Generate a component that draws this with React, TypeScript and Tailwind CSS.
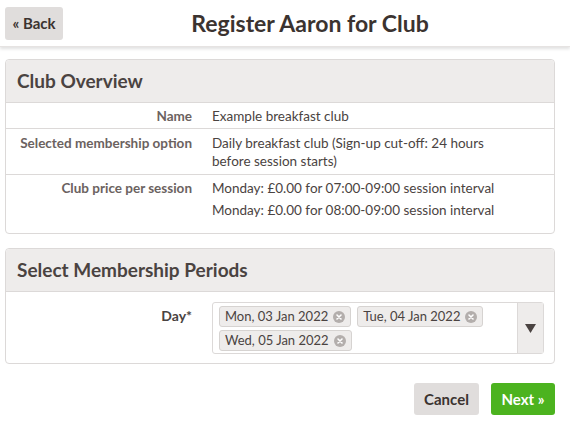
import React from "react";

const font = { fontFamily: "Lato, 'Liberation Sans', sans-serif" };

function Tag({ label }: { label: string }) {
  return (
    <span className="inline-flex items-center h-[21px] px-[5px] bg-[#eeeceb] border border-[#d6d3d1] rounded-[3px] text-[13px] text-[#4a4341] gap-[5px]">
      {label}
      <svg width="12" height="12" viewBox="0 0 12 12">
        <circle cx="6" cy="6" r="6" fill="#b3aeac" />
        <path d="M4 4 L8 8 M8 4 L4 8" stroke="#fff" strokeWidth="1.6" strokeLinecap="round" />
      </svg>
    </span>
  );
}

export default function App() {
  return (
    <div className="w-[570px] h-[430px] bg-white text-[#4a4341]" style={font}>
      <div className="h-[47px] flex items-center px-[5px] shadow-[0_2px_3px_rgba(0,0,0,0.12)] border-b border-[#e6e3e2]">
        <button className="h-[33px] w-[58px] bg-[#e0dddc] rounded-[3px] text-[15px] font-bold text-[#3b3330]">
          « Back
        </button>
        <h1 className="flex-1 text-center text-[23px] font-bold text-[#3b3330] ml-[62px] mr-[70px]">
          Register Aaron for Club
        </h1>
      </div>

      <div className="ml-[5px] mr-[15px] mt-[12px] border border-[#dcd9d8] rounded-[4px]">
        <div className="h-[43px] bg-[#eeeceb] border-b border-[#dcd9d8] flex items-center px-[11px] text-[19px] font-bold text-[#4a4341] rounded-t-[4px]">
          Club Overview
        </div>
        <div className="grid grid-cols-[186px_1fr] text-[13.5px] leading-[18px]">
          <div className="text-right font-bold text-[#6b6260] pt-[4px] pb-[3px] border-b border-[#dcd9d8]">Name</div>
          <div className="pl-[20px] pt-[4px] pb-[3px] border-b border-[#dcd9d8]">Example breakfast club</div>
          <div className="text-right font-bold text-[#6b6260] pt-[5px] pb-[4px] border-b border-[#dcd9d8]">Selected membership option</div>
          <div className="pl-[20px] pr-[50px] pt-[5px] pb-[4px] border-b border-[#dcd9d8]">
            Daily breakfast club (Sign-up cut-off: 24 hours before session starts)
          </div>
          <div className="text-right font-bold text-[#6b6260] pt-[2px] pb-[12px] leading-[22px]">Club price per session</div>
          <div className="pl-[20px] pt-[2px] pb-[12px] leading-[22px]">
            <div>Monday: £0.00 for 07:00-09:00 session interval</div>
            <div>Monday: £0.00 for 08:00-09:00 session interval</div>
          </div>
        </div>
      </div>

      <div className="ml-[5px] mr-[15px] mt-[14px] border border-[#dcd9d8] rounded-[4px]">
        <div className="h-[43px] bg-[#eeeceb] border-b border-[#dcd9d8] flex items-center px-[11px] text-[19px] font-bold text-[#4a4341] rounded-t-[4px]">
          Select Membership Periods
        </div>
        <div className="grid grid-cols-[186px_1fr] pt-[10px] pb-[9px]">
          <div className="text-right font-bold text-[#4a4341] text-[14px] pt-[3px]">Day*</div>
          <div className="pl-[20px] pr-[10px]">
            <div className="flex border border-[#dcd9d8] rounded-[3px] h-[52px]">
              <div className="flex-1 flex flex-wrap content-start gap-x-[6px] gap-y-[3px] pl-[6px] pt-[3px]">
                <Tag label="Mon, 03 Jan 2022" />
                <Tag label="Tue, 04 Jan 2022" />
                <Tag label="Wed, 05 Jan 2022" />
              </div>
              <div className="w-[26px] bg-[#eeeceb] border-l border-[#dcd9d8] flex items-center justify-center">
                <svg width="11" height="9" viewBox="0 0 11 9">
                  <path d="M0 0 H11 L5.5 9 Z" fill="#4a4341" />
                </svg>
              </div>
            </div>
          </div>
        </div>
      </div>

      <div className="flex justify-end gap-[12px] mt-[19px] mr-[15px]">
        <button className="h-[32px] w-[65px] bg-[#e0dddc] rounded-[3px] text-[15px] font-bold text-[#3b3330]">Cancel</button>
        <button className="h-[32px] w-[64px] bg-[#4cb31f] rounded-[3px] text-[15px] font-bold text-white">Next »</button>
      </div>
    </div>
  );
}
